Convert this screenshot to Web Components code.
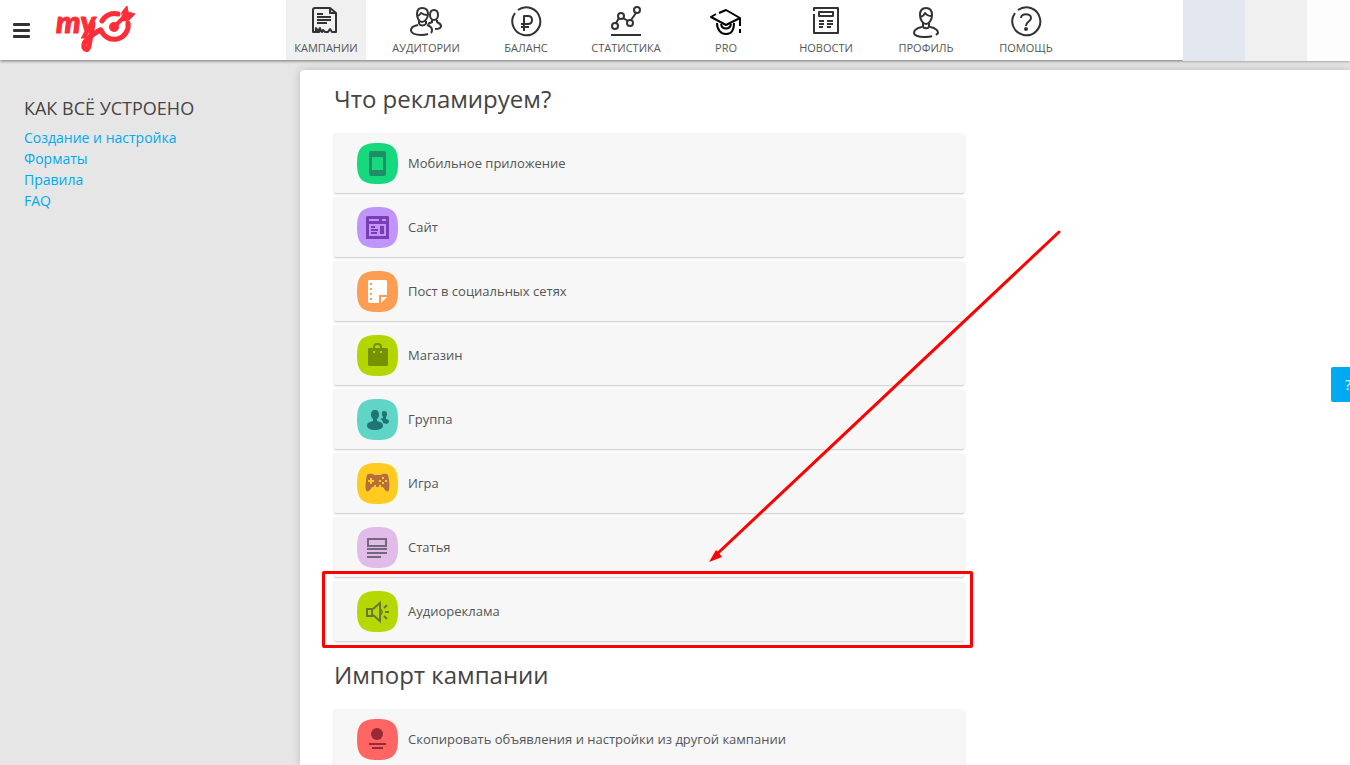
<!DOCTYPE html>
<html lang="ru">
<head>
<meta charset="utf-8">
<meta name="viewport" content="width=device-width, initial-scale=1">
<title>Новая кампания</title>
<style>
  html, body {
    height: 100%;
  }

  body {
    margin: 0;
    overflow: hidden;
    background: #e6e6e6;
    color: #444;
    font-family: "Open Sans", "Noto Sans", sans-serif;
  }
</style>
</head>
<body>
<campaign-page>
  <top-bar slot="header">
    <nav-item icon="campaigns" active>Кампании</nav-item>
    <nav-item icon="audience">Аудитории</nav-item>
    <nav-item icon="balance">Баланс</nav-item>
    <nav-item icon="stats">Статистика</nav-item>
    <nav-item icon="pro">Pro</nav-item>
    <nav-item icon="news">Новости</nav-item>
    <nav-item icon="profile">Профиль</nav-item>
    <nav-item icon="help">Помощь</nav-item>
  </top-bar>

  <side-menu slot="side" heading="Как всё устроено">
    <side-link>Создание и настройка</side-link>
    <side-link>Форматы</side-link>
    <side-link>Правила</side-link>
    <side-link>FAQ</side-link>
  </side-menu>

  <option-section heading="Что рекламируем?">
    <option-card icon="mobile">Мобильное приложение</option-card>
    <option-card icon="site">Сайт</option-card>
    <option-card icon="post">Пост в социальных сетях</option-card>
    <option-card icon="shop">Магазин</option-card>
    <option-card icon="group">Группа</option-card>
    <option-card icon="game">Игра</option-card>
    <option-card icon="article">Статья</option-card>
    <option-card icon="audio" marked>Аудиореклама</option-card>
    <pointer-arrow slot="overlay"></pointer-arrow>
  </option-section>

  <option-section heading="Импорт кампании">
    <option-card icon="copy">Скопировать объявления и настройки из другой кампании</option-card>
  </option-section>

  <help-tab slot="help">?</help-tab>
</campaign-page>

<script>
const NAV_ICONS = {
  campaigns: `
    <path d="M3 26V4q0-2 2-2h15l6 5v19h-4l-2-3-2 3h-3l-2-2-1 2-2-2-1 2z"/>
    <path d="M6 26v-4l2 3 2-3 1 3M20 2v5h6M7 8h6M7 11h14M7 14h14M7 17h10"/>`,
  audience: `
    <path d="M12 2c-4 0-5 3-5 6 0 4 2 8 5 8s6-4 6-8c0-3-1-6-6-6z"/>
    <path d="M7 10q2 0 4-3 3 2 7 2M9 15v3M16 15v3M9 18q3 3 7 0"/>
    <path d="M8 19c-5 1-7 3-7 5 0 3 4 5 10 5q4 0 7-1M17 19c3 1 5 2 5 5q0 2-1 3"/>
    <path d="M24 4c-3 0-4 2-4 5 0 2 1 5 4 5s4-3 4-5c0-3-1-5-4-5z"/>
    <path d="M22 14v3M27 14v2q4 2 4 4 0 3-6 3M18 18l4-2"/>`,
  balance: `
    <path d="M5 7a14 14 0 1 0 3-3"/>
    <path d="M14 25V10h4q4 0 4 4t-4 4h-7M11 21h8"/>`,
  stats: `
    <circle cx="5" cy="20" r="3"/><circle cx="11" cy="10" r="3"/>
    <circle cx="20" cy="17" r="3"/><circle cx="27" cy="4" r="3"/>
    <path d="M6 17l3-5M13 12l5 3M21 14l5-7M1 29h30"/>`,
  pro: `
    <path stroke="#000" d="M6 8l-5 3 15 8 14-7-14-8-7 3M30 12v8M30 23v4"/>
    <path stroke="#000" d="M7 17c0 7 4 11 9 11s8-4 8-11M11 18c1 6 9 6 10 0"/>`,
  news: `
    <path d="M4 5V2h24v25H4V8"/>
    <path d="M9 6h14v4H9zM9 15h5M17 15h6M9 18h5M17 18h6M9 21h4M17 21h4"/>`,
  profile: `
    <path d="M16 2c-5 0-6 3-6 7 0 5 3 9 6 9s6-4 6-9c0-4-1-7-6-7z"/>
    <path d="M10 11q4-1 5-4 2 3 7 3M13 17v4M19 17v4M12 20c2 3 6 3 8 0"/>
    <path d="M12 21c-5 1-8 3-8 6 0 2 4 4 10 4 4 0 6 0 8-1M20 21c5 1 8 3 8 6l-2 2"/>`,
  help: `
    <path d="M5 7a14 14 0 1 0 3-3"/>
    <path d="M11 12c0-5 10-5 10 0 0 4-5 3-5 8"/>
    <circle cx="16" cy="23" r="1" fill="currentColor"/>`,
};

// back is the tile colour, ink is the drawing on it
const TILE_ICONS = {
  mobile: {
    back: "#15d97c", ink: "#1f8d65",
    body: `<path fill-rule="evenodd" d="M14 8h13q2 0 2 2v21q0 2-2 2H14q-2 0-2-2V10q0-2 2-2zm1 6v13h11V14z"/>`,
  },
  site: {
    back: "#bf95f9", ink: "#7b3cb5",
    body: `<path fill-rule="evenodd" d="M10 9h21l1 1v22H9V10zm2 3v2h10v-2zm13 0v2h4v-2zM12 17v12h17V17z"/>
      <path d="M14 19h4v2h-4zM14 22h7v2h-7zM14 25h6v2h-6zM23 19h4v8h-4z"/>`,
  },
  post: {
    back: "#fc9d52", ink: "#fff",
    body: `<path fill-rule="evenodd" d="M12 9h17l1 1v14h-8v8H12l-1-1V10zm1 3v2h2v-2zm0 5v2h2v-2zm0 5v2h2v-2zm0 5v2h2v-2z"/>
      <path d="M24 26h6l-6 6z"/>`,
  },
  shop: {
    back: "#b4d600", ink: "#769100",
    body: `<path d="M12 13h18l1 1v16l-1 1H12l-1-1V14z"/>
      <path fill="none" stroke="#769100" stroke-width="2" d="M17 14v-2q0-3 3-3h1q3 0 3 3v2"/>
      <path fill="#b4d600" d="M16 16h2v2h-2zM23 16h2v2h-2z"/>`,
  },
  group: {
    back: "#61d5c5", ink: "#1f7474",
    body: `<path d="M18 11c3 0 4 2 4 5 0 2-1 3-2 4v2c4 1 6 2 6 5 0 2-3 4-8 4s-8-2-8-4c0-3 2-4 6-5v-2c-1-1-2-2-2-4 0-3 1-5 4-5z"/>
      <path d="M27 12c2 0 3 1 3 3 0 1 0 2-1 3v2c2 0 3 1 3 3l-2 2-4-1c0-2-1-3-3-4l3-1v-1c-1-1-1-2-1-3 0-2 0-3 2-3z"/>`,
  },
  game: {
    back: "#ffcb20", ink: "#b66e3e",
    body: `<path d="M10 12c2-2 6-1 7 0h7c1-1 5-2 7 0 1 4 2 11 1 15-1 3-4 1-6-3H15c-2 4-5 6-6 3-1-4 0-11 1-15z"/>
      <path fill="#ffcb20" d="M13 15h2v2h2v2h-2v2h-2v-2h-2v-2h2zM25 14h2v2h-2zM25 19h2v2h-2zM22 17h2v2h-2zM28 17h2v2h-2zM17 22h2v2h-2zM22 22h2v2h-2z"/>`,
  },
  article: {
    back: "#e1bce8", ink: "#74667c",
    body: `<path fill-rule="evenodd" d="M10 11h20v9H10zm2 2v5h16v-5zM10 21h20v2H10zM10 25h20v2H10zM10 29h14v2H10z"/>`,
  },
  audio: {
    back: "#b5d900", ink: "#69773a",
    body: `<path fill="none" stroke="#69773a" stroke-width="2" d="M10 18h5v7h-5zM16 18l7-6v18l-7-6M27 17l3-3M28 21h4M27 25l3 3"/>
      <path fill-opacity=".8" d="M22 17c5 0 5 8 0 8z"/>`,
  },
  copy: {
    back: "#ff6663", ink: "#982936",
    body: `<circle cx="20" cy="15" r="6"/><path d="M12 24h17v2H12zM15 28h11v2H15z"/>`,
  },
};

class CampaignPage extends HTMLElement {
  constructor() {
    super();
    this.attachShadow({ mode: "open" }).innerHTML = `
      <style>
        :host { display: flex; flex-direction: column; height: 100vh; }
        .columns { display: flex; flex: 1; padding-top: 10px; min-height: 0; }
        aside { flex: 0 0 300px; }
        main {
          flex: 1;
          padding: 0 34px;
          background: #fff;
          border-top-left-radius: 4px;
          box-shadow: 0 0 8px rgba(0, 0, 0, .2);
          overflow: hidden;
        }
      </style>
      <slot name="header"></slot>
      <div class="columns">
        <aside><slot name="side"></slot></aside>
        <main><slot></slot></main>
      </div>
      <slot name="help"></slot>
    `;
  }
}

class TopBar extends HTMLElement {
  constructor() {
    super();
    this.attachShadow({ mode: "open" }).innerHTML = `
      <style>
        :host { display: block; position: relative; z-index: 1; }
        header {
          display: flex;
          height: 60px;
          background: #fff;
          box-shadow: 0 1px 3px rgba(0, 0, 0, .5);
        }
        .brand { display: flex; align-items: center; gap: 20px; flex: 0 0 274px; padding-left: 12px; }
        button {
          display: flex;
          flex-direction: column;
          gap: 3px;
          padding: 1px;
          border: 0;
          background: none;
        }
        button span { width: 17px; height: 3px; border-radius: 1px; background: #333; }
        a { display: block; height: 56px; }
        nav { display: flex; gap: 20px; flex: 1; }
        .account { display: flex; height: 61px; }
        .account div { width: 62px; background: #e2e7f0; }
        .account div + div { background: #f0f0f0; }
        .account div:last-child { width: 43px; background: #fdfdfd; }
        svg { display: block; overflow: visible; }
        text { font: italic 900 31px Lato, "Open Sans", sans-serif; }
      </style>
      <header>
        <div class="brand">
          <button aria-label="Меню"><span></span><span></span><span></span></button>
          <a href="#" aria-label="myTarget">
            <svg width="86" height="56" viewBox="-4 -2 86 56" fill="none" stroke="#ff2d37" stroke-width="4" stroke-linecap="round" stroke-linejoin="round">
              <text x="1" y="29" fill="#ff2d37" stroke-width="1">my</text>
              <path stroke-width="5" d="M38 20l-4 22q-1 5-4 3c-5-6 5-13 15-19"/>
              <path stroke-width="5" d="M47 17A14 14 0 0 1 63 10M46 26A14 14 0 0 0 73 19"/>
              <circle cx="59" cy="23" r="5" fill="#ff2d37" stroke="none"/>
              <path d="M59 23l12-12"/>
              <path fill="#ff2d37" stroke-width="1" d="M67 8l5-6 1 6 7 2-6 6-6 1z"/>
            </svg>
          </a>
        </div>
        <nav><slot></slot></nav>
        <div class="account"><div></div><div></div><div></div></div>
      </header>
    `;
  }
}

class NavItem extends HTMLElement {
  constructor() {
    super();
    this.attachShadow({ mode: "open" }).innerHTML = `
      <style>
        :host { display: block; flex: 0 0 80px; }
        :host([active]) { background: #f0f0f0; }
        a {
          display: flex;
          flex-direction: column;
          align-items: center;
          padding-top: 6px;
          color: #555;
          font-size: 11px;
          line-height: 20px;
          text-decoration: none;
          text-transform: uppercase;
          white-space: nowrap;
        }
        svg { display: block; color: #333; }
      </style>
      <a href="#">
        <svg width="32" height="32" viewBox="0 0 32 32" fill="none" stroke="currentColor" stroke-width="2" stroke-linejoin="round">
          ${NAV_ICONS[this.getAttribute("icon")]}
        </svg>
        <slot></slot>
      </a>
    `;
  }
}

class SideMenu extends HTMLElement {
  constructor() {
    super();
    this.attachShadow({ mode: "open" }).innerHTML = `
      <style>
        :host { display: block; padding: 24px 24px 0; }
        h2 {
          margin: 0 0 5px;
          font-size: 18px;
          font-weight: 400;
          line-height: 28px;
          text-transform: uppercase;
        }
        nav { display: flex; flex-direction: column; align-items: flex-start; }
      </style>
      <h2>${this.getAttribute("heading")}</h2>
      <nav><slot></slot></nav>
    `;
  }
}

class SideLink extends HTMLElement {
  constructor() {
    super();
    this.attachShadow({ mode: "open" }).innerHTML = `
      <style>
        :host { display: block; }
        a { display: block; color: #00aaf2; font-size: 14px; line-height: 21px; text-decoration: none; }
      </style>
      <a href="#"><slot></slot></a>
    `;
  }
}

class OptionSection extends HTMLElement {
  constructor() {
    super();
    this.attachShadow({ mode: "open" }).innerHTML = `
      <style>
        :host { display: block; max-width: 630px; }
        h1 { margin: 0; padding: 11px 0 16px; font-size: 24px; font-weight: 400; line-height: 36px; }
        .list { position: relative; display: grid; gap: 4px; padding-bottom: 5px; }
      </style>
      <h1>${this.getAttribute("heading")}</h1>
      <div class="list">
        <slot></slot>
        <slot name="overlay"></slot>
      </div>
    `;
  }
}

class OptionCard extends HTMLElement {
  constructor() {
    super();
    const icon = TILE_ICONS[this.getAttribute("icon")];
    this.attachShadow({ mode: "open" }).innerHTML = `
      <style>
        :host { display: block; position: relative; }
        :host([marked])::after {
          content: "";
          position: absolute;
          inset: -10px -9px -7px -12px;
          border: 3px solid #f00;
          border-radius: 2px;
          pointer-events: none;
        }
        button {
          display: flex;
          align-items: center;
          gap: 10px;
          width: 100%;
          height: 60px;
          padding: 0 23px;
          border: 0;
          border-radius: 2px;
          background: #f7f7f7;
          box-shadow: 0 1px 2px rgba(0, 0, 0, .22);
          color: #555;
          font: inherit;
          font-size: 13px;
          text-align: left;
        }
      </style>
      <button>
        <svg width="41" height="41" viewBox="0 0 41 41" fill="${icon.ink}">
          <path fill="${icon.back}" d="M20.500 0C36 0 41 5 41 20.500S36 41 20.500 41 0 36 0 20.500 5 0 20.500 0z"/>
          ${icon.body}
        </svg>
        <span><slot></slot></span>
      </button>
    `;
  }
}

class PointerArrow extends HTMLElement {
  constructor() {
    super();
    this.attachShadow({ mode: "open" }).innerHTML = `
      <style>
        :host { position: absolute; left: 374px; top: 96px; pointer-events: none; }
        svg { display: block; }
      </style>
      <svg width="354" height="336" viewBox="0 0 354 336" fill="#f00">
        <path stroke="#f00" stroke-width="3" stroke-linecap="round" d="M351 3L10 324"/>
        <path d="M1 333l7-12 3 3 3 4z"/>
      </svg>
    `;
  }
}

class HelpTab extends HTMLElement {
  constructor() {
    super();
    this.attachShadow({ mode: "open" }).innerHTML = `
      <style>
        :host { position: fixed; right: 0; top: 367px; width: 19px; overflow: hidden; }
        button {
          height: 35px;
          padding: 0 14px;
          border: 0;
          border-radius: 2px 0 0 2px;
          background: #00aaf2;
          color: #fff;
          font: inherit;
          font-size: 14px;
        }
      </style>
      <button><slot></slot></button>
    `;
  }
}

customElements.define("campaign-page", CampaignPage);
customElements.define("top-bar", TopBar);
customElements.define("nav-item", NavItem);
customElements.define("side-menu", SideMenu);
customElements.define("side-link", SideLink);
customElements.define("option-section", OptionSection);
customElements.define("option-card", OptionCard);
customElements.define("pointer-arrow", PointerArrow);
customElements.define("help-tab", HelpTab);
</script>
</body>
</html>
